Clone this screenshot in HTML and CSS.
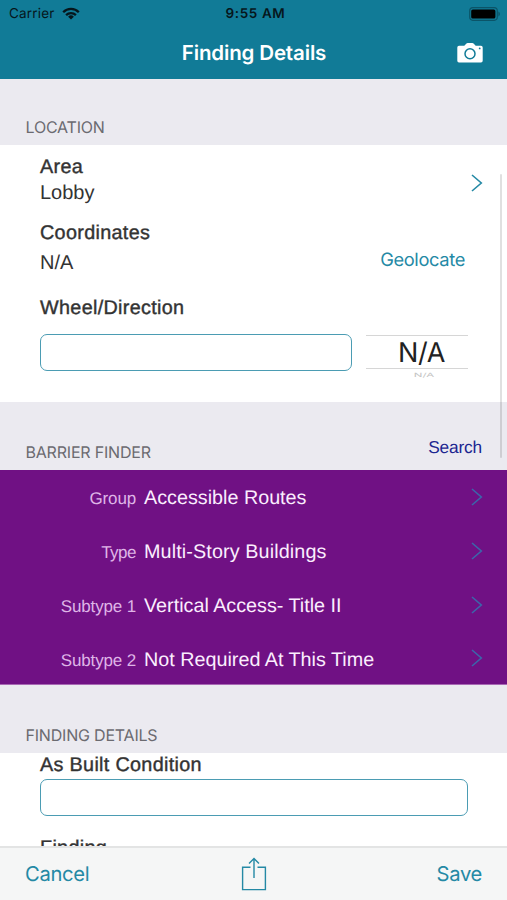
FILE: index.html
```
<!DOCTYPE html>
<html lang="en">
<head>
<meta charset="utf-8">
<title>Finding Details</title>
<link rel="stylesheet" href="styles.css">
</head>
<body>
<div class="screen">
  <header class="top">
    <div class="status">
      <div class="carrier"><span>Carrier</span>
        <svg width="18" height="13" viewBox="0 0 18 13"><g fill="none" stroke="#06161c" stroke-width="2.3"><path d="M1.2 5.2a11 11 0 0 1 15.6 0"/><path d="M4.1 8.1a7 7 0 0 1 9.8 0"/></g><path fill="#06161c" d="M9 12.6 6.1 9.8a4.1 4.1 0 0 1 5.8 0z"/></svg>
      </div>
      <span class="time">9:55 AM</span>
      <svg class="battery" width="32" height="14" viewBox="0 0 32 14"><rect x=".7" y=".7" width="27.6" height="12.6" rx="3.2" fill="none" stroke="#0b5468" stroke-width="1.2"/><rect x="2.2" y="2.4" width="24.2" height="9.2" rx="1.6" fill="#000"/><path fill="#0b5468" d="M29.4 4.6c2 .7 2 4.1 0 4.8z"/></svg>
    </div>
    <div class="nav">
      <h1>Finding Details</h1>
      <svg class="camera" width="26" height="20" viewBox="0 0 26 20"><path fill="#fff" d="M2 2.8h5.3L9.2.7Q9.8 0 10.8 0h4.4q1 0 1.6.7l1.9 2.1H24q1.7 0 1.7 1.7v13.3q0 1.7-1.7 1.7H2q-1.7 0-1.7-1.7V4.5Q.3 2.8 2 2.8z"/><circle cx="13" cy="10.7" r="5" fill="none" stroke="#117b97" stroke-width="1.5"/><circle cx="22.7" cy="5.4" r=".9" fill="#117b97"/></svg>
    </div>
  </header>
  <main class="content">
    <div class="section first"><h2>LOCATION</h2></div>
    <section class="location">
      <div class="area">
        <div><div class="label">Area</div><div class="value">Lobby</div></div>
        <svg class="chev" width="12" height="18" viewBox="0 0 12 18"><path d="m1 1 9.3 8L1 17"/></svg>
      </div>
      <div class="coords">
        <div><div class="label">Coordinates</div><div class="value">N/A</div></div>
        <a class="geo">Geolocate</a>
      </div>
      <div class="label l-wheel">Wheel/Direction</div>
      <div class="wheel">
        <div class="field"></div>
        <div class="picker"><div class="picked">N/A</div><div class="next">N/A</div></div>
      </div>
    </section>
    <div class="section second"><h2>BARRIER FINDER</h2><a class="search">Search</a></div>
    <section class="barrier">
      <div class="row"><span class="key">Group</span><span class="val">Accessible Routes</span><svg class="chev" width="12" height="18" viewBox="0 0 12 18"><path d="m1 1 9.3 8L1 17"/></svg></div>
      <div class="row"><span class="key type">Type</span><span class="val story">Multi-Story Buildings</span><svg class="chev" width="12" height="18" viewBox="0 0 12 18"><path d="m1 1 9.3 8L1 17"/></svg></div>
      <div class="row"><span class="key">Subtype 1</span><span class="val">Vertical Access- Title II</span><svg class="chev" width="12" height="18" viewBox="0 0 12 18"><path d="m1 1 9.3 8L1 17"/></svg></div>
      <div class="row"><span class="key">Subtype 2</span><span class="val">Not Required At This Time</span><svg class="chev" width="12" height="18" viewBox="0 0 12 18"><path d="m1 1 9.3 8L1 17"/></svg></div>
    </section>
    <div class="section third"><h2>FINDING DETAILS</h2></div>
    <section class="details">
      <div class="label">As Built Condition</div>
      <div class="field"></div>
      <div class="label l-find">Finding</div>
    </section>
    <div class="scrollbar"></div>
  </main>
  <footer class="toolbar">
    <a class="cancel">Cancel</a>
    <svg width="26" height="34" viewBox="0 0 26 34"><path fill="none" stroke="#2489a5" stroke-width="1.4" d="M9.5 10.2H1.6v22.4h22.8V10.2h-7.9M13 21V1.6M8 6.6l5-5 5 5"/></svg>
    <a class="save">Save</a>
  </footer>
</div>
</body>
</html>
```
FILE: styles.css
```
* { box-sizing: border-box; }
body { margin: 0; background: #fff; }
h1, h2 { margin: 0; font-weight: 400; }
svg { display: block; flex: none; }

.screen {
  width: 507px;
  height: 900px;
  display: flex;
  flex-direction: column;
  overflow: hidden;
  font-family: Inter, "Liberation Sans", sans-serif;
  text-rendering: geometricPrecision;
  white-space: nowrap;
}

.top { flex: none; height: 79px; background: #117b97; }
.status {
  display: grid;
  grid-template-columns: 1fr auto 1fr;
  align-items: center;
  height: 27px;
  padding: 0 6px 0 9px;
  color: #06161c;
  font-size: 13.5px;
  line-height: 27px;
}
.carrier { display: flex; align-items: center; gap: 7px; letter-spacing: .2px; padding-top: 1px; }
.carrier svg { margin-top: -2px; }
.time { font-weight: 600; letter-spacing: .6px; padding: 1px 0 0 1px; }
.battery { justify-self: end; }
.nav {
  display: grid;
  grid-template-columns: 1fr auto 1fr;
  height: 52px;
  padding: 0 24px;
  align-items: center;
}
.nav h1 { grid-column: 2; color: #fff; font-size: 20.5px; font-weight: 600; line-height: 52px; letter-spacing: -.15px; padding-left: 1px; }
.camera { justify-self: end; }

.content { position: relative; height: 767px; flex: none; overflow: hidden; }
.section {
  display: flex;
  justify-content: space-between;
  align-items: flex-end;
  padding: 0 25px 8px;
  background: #ebeaf0;
}
.section h2 { color: #6b6b70; font-size: 16px; line-height: 20px; letter-spacing: -.2px; padding-left: .5px; }
.first { height: 66px; }
.second { height: 68px; }
.third { height: 68px; }
.search { color: #1c2690; font: 17.3px/20px "Liberation Sans", sans-serif; letter-spacing: -.15px; margin-bottom: 5px; }

.label, .value, .row { font-family: "Liberation Sans", sans-serif; color: #333; }
.label { font-size: 19.8px; line-height: 24px; letter-spacing: .32px; -webkit-text-stroke: .4px #333; }
.value { font-size: 20px; line-height: 24px; }
.location { height: 257px; padding: 10px 39px 0 40px; }
.area { display: flex; justify-content: space-between; }
.area .value { margin-top: 2px; }
.chev { fill: none; stroke: #2489a5; stroke-width: 1.6; }
.area .chev { margin: 19px -15px 0 0; }
.coords { display: flex; justify-content: space-between; margin-top: 16px; }
.coords .value { margin-top: 6px; }
.geo { color: #2489a5; font-size: 18.3px; line-height: 24px; letter-spacing: -.35px; margin: 27px 3px 0 0; }
.l-wheel { margin-top: 21px; }
.wheel { display: flex; gap: 14px; margin-top: 14px; }
.field { height: 37px; border: 1.5px solid #4b9cb3; border-radius: 7px; background: #fff; }
.wheel .field { width: 312px; }
.picker { width: 102px; height: 46px; padding-top: 1px; text-align: center; }
.picked { height: 34px; border: solid #d6d6d6; border-width: 1px 0; color: #222; font-size: 27px; line-height: 33px; letter-spacing: -.4px; padding-left: 9px; }
.next { height: 12px; padding-left: 14px; color: #c4c4c4; font-size: 11.5px; line-height: 12px; transform: scaleY(.5); }

.barrier { height: 215px; background: #701184; border-bottom: 1px solid #a868b4; }
.row {
  display: grid;
  grid-template-columns: 136px 1fr 12px;
  column-gap: 8px;
  align-items: center;
  height: 54px;
  padding-right: 24px;
}
.row .key { justify-self: end; color: #dfb5e7; font-size: 17px; line-height: 20px; letter-spacing: -.15px; padding-top: 4px; }
.row .type { letter-spacing: -.5px; }
.row .val { color: #fbeefe; font-size: 19.75px; line-height: 22px; padding-top: 2px; }
.row .story { letter-spacing: .12px; }
.row .chev { stroke: #3c66aa; }
.row:last-child .chev { margin-top: -2px; }
.details { padding: 0 39px 0 40px; }
.details .field { margin-top: 2px; }
.l-find { margin-top: 20px; }

.scrollbar { position: absolute; right: 5px; top: 95px; width: 2px; height: 284px; border-radius: 1px; background: rgba(0, 0, 0, .12); }
.toolbar {
  flex: none;
  display: grid;
  grid-template-columns: 1fr auto 1fr;
  align-items: center;
  height: 54px;
  padding: 0 25px;
  border-top: 2px solid #e3e4e4;
  background: #f5f6f6;
  color: #2489a5;
  font-size: 20.2px;
  letter-spacing: -.3px;
}
.toolbar a { margin-bottom: 2px; }
.save { justify-self: end; }
```
